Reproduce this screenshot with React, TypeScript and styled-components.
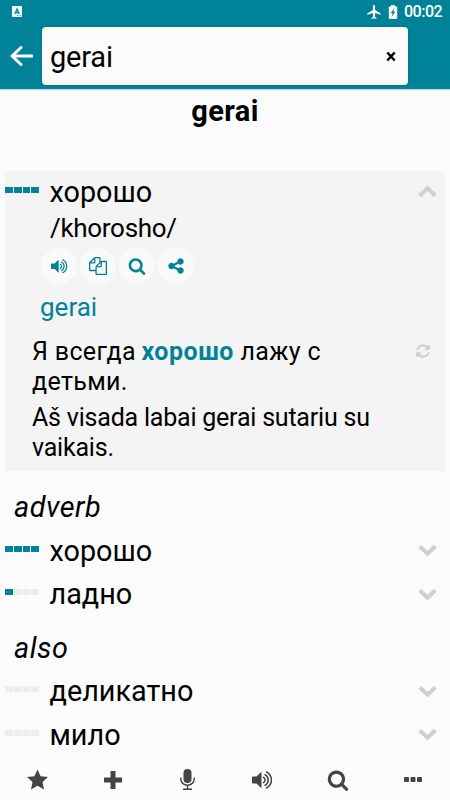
import React from "react";
import styled, { createGlobalStyle } from "styled-components";

const TEAL = "#008299";

const GlobalStyle = createGlobalStyle`
  * { box-sizing: border-box; }
  body { margin: 0; background: #fbfbfb; }
`;

const Screen = styled.div`
  width: 450px;
  height: 800px;
  overflow: hidden;
  display: flex;
  flex-direction: column;
  background: #fbfbfb;
  color: #000;
  font-family: Roboto, "Noto Sans", sans-serif;
`;

const Header = styled.header`
  height: 89px;
  flex: none;
  background: ${TEAL};
  box-shadow: 0 1px 1px rgba(0, 100, 120, 0.25);
`;

const StatusBar = styled.div`
  height: 27px;
  display: flex;
  align-items: center;
  padding: 0 8px 4px 12px;
  color: #fff;
`;

const StatusIcons = styled.div`
  margin-left: auto;
  display: flex;
  align-items: center;
  gap: 7px;
`;

const Clock = styled.span`
  font-size: 16px;
  line-height: 24px;
  font-weight: 500;
  width: 38px;
  margin-left: -1px;
  white-space: nowrap;
  letter-spacing: -0.5px;
`;

const SearchBar = styled.div`
  display: flex;
  align-items: center;
  padding-left: 10px;
`;

const SearchField = styled.div`
  width: 366px;
  height: 58px;
  margin-left: 9px;
  padding: 0 12px 0 8px;
  display: flex;
  align-items: center;
  justify-content: space-between;
  border-radius: 4px;
  background: #fbfbfb;
  box-shadow: 0 0 2px rgba(0, 60, 80, 0.4);
  font-size: 29px;
  line-height: 58px;
  letter-spacing: -0.2px;
`;

const Query = styled.span`
  padding-top: 2px;
`;

const Title = styled.h1`
  margin: 0 0 42px;
  height: 40px;
  padding-top: 4px;
  font-size: 29px;
  line-height: 36px;
  font-weight: 700;
  letter-spacing: 0.35px;
  text-align: center;
`;

const Card = styled.section`
  height: 300px;
  flex: none;
  margin: 0 5px;
  background: #f4f4f4;
`;

const Entry = styled.div<{ $inset?: boolean }>`
  height: ${(p) => (p.$inset ? 41 : 43.4)}px;
  flex: none;
  display: flex;
  align-items: center;
  padding: 0 ${(p) => (p.$inset ? 8 : 13)}px 0 ${(p) => (p.$inset ? 0 : 5)}px;
`;

const Meter = styled.div`
  width: 34px;
  display: flex;
  gap: 1px;
  margin: 0 10.500px 4px 0;
`;

const Segment = styled.span<{ $on: boolean }>`
  flex: 1;
  height: 6px;
  background: ${(p) => (p.$on ? TEAL : "#ededed")};
`;

const Word = styled.span`
  flex: 1;
  font-size: 28.8px;
  line-height: 40px;
`;

const Phonetic = styled.div`
  padding-left: 45px;
  font-size: 26px;
  line-height: 32px;
  letter-spacing: -0.3px;
`;

const Actions = styled.div`
  display: flex;
  gap: 3px;
  margin: 4px 0 0 36px;
`;

const RoundButton = styled.span`
  width: 36px;
  height: 36px;
  border-radius: 50%;
  background: #fafafa;
  color: ${TEAL};
  display: flex;
  align-items: center;
  justify-content: center;
`;

const Translation = styled.div`
  margin-top: 5px;
  padding-left: 35px;
  font-size: 26px;
  line-height: 36px;
  color: ${TEAL};
`;

const Example = styled.div`
  display: flex;
  justify-content: space-between;
  padding: 12px 14px 0 27px;
  font-size: 25px;
`;

const Sentence = styled.p<{ $second?: boolean }>`
  margin: 0;
  padding-top: ${(p) => (p.$second ? 6 : 0)}px;
  line-height: ${(p) => (p.$second ? 29.5 : 30)}px;
  letter-spacing: ${(p) => (p.$second ? -0.21 : 0.34)}px;
  white-space: nowrap;

  b {
    color: ${TEAL};
    letter-spacing: 0.5px;
    margin-left: -1px;
  }
`;

const GroupTitle = styled.h2<{ $first?: boolean }>`
  margin: 0;
  height: ${(p) => (p.$first ? 58 : 54)}px;
  flex: none;
  padding: ${(p) => (p.$first ? 16 : 12.5)}px 0 0 14px;
  font-size: 28.8px;
  line-height: 40px;
  font-weight: 400;
  font-style: italic;
  letter-spacing: 0.5px;
`;

const Toolbar = styled.nav`
  height: 41px;
  flex: none;
  display: grid;
  grid-template-columns: repeat(6, 1fr);
  place-items: center;
  color: #444;
  background: #fbfbfb;
`;

const Results = styled.main`
  flex: 1;
  min-height: 0;
  overflow: hidden;
`;

const Svg = styled.svg`
  display: block;
  flex: none;
  fill: currentColor;
`;

const Glyph = ({ d, size, box = "0 0 1792 1792" }: { d: string; size: number; box?: string }) => (
  <Svg width={size} height={size} viewBox={box}>
    <path d={d} />
  </Svg>
);

const SEARCH =
  "M1216 832q0-185-131.5-316.5t-316.5-131.5-316.5 131.5-131.5 316.5 131.5 316.5 316.5 131.5 316.5-131.5 131.5-316.5zm512 832q0 52-38 90t-90 38q-54 0-90-38l-343-342q-179 124-399 124-143 0-273.5-55.5t-225-150-150-225-55.5-273.5 55.5-273.5 150-225 225-150 273.5-55.5 273.5 55.5 225 150 150 225 55.5 273.5q0 220-124 399l343 343q37 37 37 90z";
const COPY =
  "M1696 384q40 0 68 28t28 68v1216q0 40-28 68t-68 28h-960q-40 0-68-28t-28-68v-288h-544q-40 0-68-28t-28-68v-672q0-40 20-88t48-76l408-408q28-28 76-48t88-20h416q40 0 68 28t28 68v328q68-40 128-40h416zm-544 213l-299 299h299v-299zm-640-384l-299 299h299v-299zm196 647l316-316v-416h-384v416q0 40-28 68t-68 28h-416v640h512v-256q0-40 20-88t48-76zm956 804v-1152h-384v416q0 40-28 68t-68 28h-416v640h896z";
const SHARE =
  "M1344 1024q133 0 226.5 93.5t93.5 226.5-93.5 226.5-226.5 93.5-226.5-93.5-93.5-226.5q0-12 2-34l-360-180q-92 86-218 86-133 0-226.5-93.5t-93.5-226.5 93.5-226.5 226.5-93.5q126 0 218 86l360-180q-2-22-2-34 0-133 93.5-226.5t226.5-93.5 226.5 93.5 93.5 226.5-93.5 226.5-226.5 93.5q-126 0-218-86l-360 180q2 22 2 34t-2 34l360 180q92-86 218-86z";
const REFRESH =
  "M1639 1056q0 5-1 7-64 268-268 434.5t-478 166.5q-146 0-282.5-55t-243.5-157l-129 129q-19 19-45 19t-45-19-19-45v-448q0-26 19-45t45-19h448q26 0 45 19t19 45-19 45l-137 137q71 66 161 102t187 36q134 0 250-65t186-179q11-17 53-117 8-23 30-23h192q13 0 22.5 9.5t9.5 22.5zm25-800v448q0 26-19 45t-45 19h-448q-26 0-45-19t-19-45 19-45l138-138q-148-137-349-137-134 0-250 65t-186 179q-11 17-53 117-8 23-30 23h-199q-13 0-22.5-9.5t-9.5-22.5v-7q65-268 270-434.5t480-166.5q146 0 284 55.5t245 156.5l130-129q19-19 45-19t45 19 19 45z";
const STAR = "M10.5 0l3.1 6.7 7.4.9-5.5 5 1.5 7.4-6.5-3.7L4 20l1.500-7.400L0 7.600l7.400-.9z";
const PLANE =
  "M21 16v-2l-8-5V3.500C13 2.670 12.330 2 11.500 2S10 2.670 10 3.500V9l-8 5v2l8-2.500V19l-2 1.500V22l3.500-1 3.500 1v-1.500L13 19v-5.500l8 2.500z";

const SoundIcon = ({ width }: { width: number }) => (
  <Svg width={width} height={(width * 18) / 21} viewBox="0 0 21 18">
    <path d="M0 6.2q0-.7.7-.7H4.500L8.600 1.600Q9.500.8 9.500 2v14q0 1.200-.9.4L4.500 12.500H.7q-.7 0-.7-.7z" />
    <path
      d="M11.500 6.400a3 3 0 0 1 0 5.200M13 3.700a6 6 0 0 1 0 10.600M14.500 1a9 9 0 0 1 0 16"
      fill="none"
      stroke="currentColor"
      strokeWidth="1.5"
      strokeLinecap="round"
    />
  </Svg>
);

const Chevron = ({ up }: { up?: boolean }) => (
  <Svg width="19" height="13" viewBox="0 0 19 13">
    <path
      d={up ? "M1.700 10.700L9.500 3.200l7.800 7.500" : "M1.700 2.200l7.800 7.500 7.800-7.500"}
      fill="none"
      stroke="#d0d0d0"
      strokeWidth="4"
    />
  </Svg>
);

const Row = ({ word, level, open }: { word: string; level: number; open?: boolean }) => (
  <Entry $inset={open}>
    <Meter>
      {[0, 1, 2, 3].map((i) => (
        <Segment key={i} $on={i < level} />
      ))}
    </Meter>
    <Word>{word}</Word>
    <Chevron up={open} />
  </Entry>
);

const RefreshSlot = styled.span`
  color: #d0d0d0;
  padding-top: 6px;
`;

export default function App() {
  return (
    <Screen>
      <GlobalStyle />
      <Header>
        <StatusBar>
          <Svg width="10" height="11" viewBox="0 0 10 11">
            <rect width="10" height="11" rx="0.8" />
            <path d="M2.700 8L5 3l2.300 5M3.600 6.500h2.800" fill="none" stroke={TEAL} strokeWidth="1.300" />
            <path d="M5 9.600h3.800" stroke={TEAL} strokeWidth="0.700" strokeDasharray="1 .4" />
          </Svg>
          <StatusIcons>
            <Glyph d={PLANE} size={14} box="2 2 19 20" />
            <Svg width="10" height="14" viewBox="0 0 10 15">
              <path d="M3 0h4v1.500h2.500V14q0 1-1 1h-7q-1 0-1-1V1.500H3z" />
              <path d="M6.300 3.500L2.500 8.700h2l-.8 3.800 3.800-5.300h-2z" fill={TEAL} />
            </Svg>
            <Clock>00:02</Clock>
          </StatusIcons>
        </StatusBar>
        <SearchBar>
          <Svg width="23" height="20" viewBox="0 0 23 20">
            <path
              d="M11 1.500L2 10l9 8.500M2 10h20"
              fill="none"
              stroke="#fff"
              strokeWidth="2.900"
              strokeLinecap="round"
              strokeLinejoin="round"
            />
          </Svg>
          <SearchField>
            <Query>gerai</Query>
            <Svg width="10" height="11" viewBox="0 0 10 11">
              <path d="M1.300 1.500l7.400 8m0-8l-7.400 8" stroke="#000" strokeWidth="2.500" />
            </Svg>
          </SearchField>
        </SearchBar>
      </Header>

      <Results>
        <Title>gerai</Title>
        <Card>
          <Row word="хорошо" level={4} open />
          <Phonetic>/khorosho/</Phonetic>
          <Actions>
            <RoundButton><SoundIcon width={17} /></RoundButton>
            <RoundButton><Glyph d={COPY} size={18} /></RoundButton>
            <RoundButton><Glyph d={SEARCH} size={18} /></RoundButton>
            <RoundButton><Glyph d={SHARE} size={18} /></RoundButton>
          </Actions>
          <Translation>gerai</Translation>
          <Example>
            <div>
              <Sentence>Я всегда <b>хорошо</b> лажу с<br />детьми.</Sentence>
              <Sentence $second>Aš visada labai gerai sutariu su<br />vaikais.</Sentence>
            </div>
            <RefreshSlot><Glyph d={REFRESH} size={16} /></RefreshSlot>
          </Example>
        </Card>
        <GroupTitle $first>adverb</GroupTitle>
        <Row word="хорошо" level={4} />
        <Row word="ладно" level={1} />
        <GroupTitle>also</GroupTitle>
        <Row word="деликатно" level={0} />
        <Row word="мило" level={0} />
      </Results>

      <Toolbar>
        <Glyph d={STAR} size={21} box="0 0 21 20" />
        <Svg width="18" height="18" viewBox="0 0 18 18">
          <path d="M7 0h4q.5 0 .5.5v6h6q.5 0 .5.5v4q0 .5-.5.5h-6v6q0 .5-.5.5H7q-.5 0-.5-.5v-6h-6Q0 11.500 0 11V7q0-.5.5-.5h6v-6Q6.500 0 7 0z" />
        </Svg>
        <Svg width="15" height="21" viewBox="0 0 15 21">
          <rect x="3.500" y="0" width="8" height="14" rx="4" />
          <path d="M.8 8.500V10a6.700 6.200 0 0 0 13.400 0V8.500M7.500 16.500v3.500M3 20.200h9" fill="none" stroke="currentColor" strokeWidth="1.400" />
        </Svg>
        <SoundIcon width={21} />
        <Glyph d={SEARCH} size={22} />
        <Svg width="18" height="5" viewBox="0 0 18 5">
          <rect width="5" height="5" rx="1" />
          <rect x="6.500" width="5" height="5" rx="1" />
          <rect x="13" width="5" height="5" rx="1" />
        </Svg>
      </Toolbar>
    </Screen>
  );
}
